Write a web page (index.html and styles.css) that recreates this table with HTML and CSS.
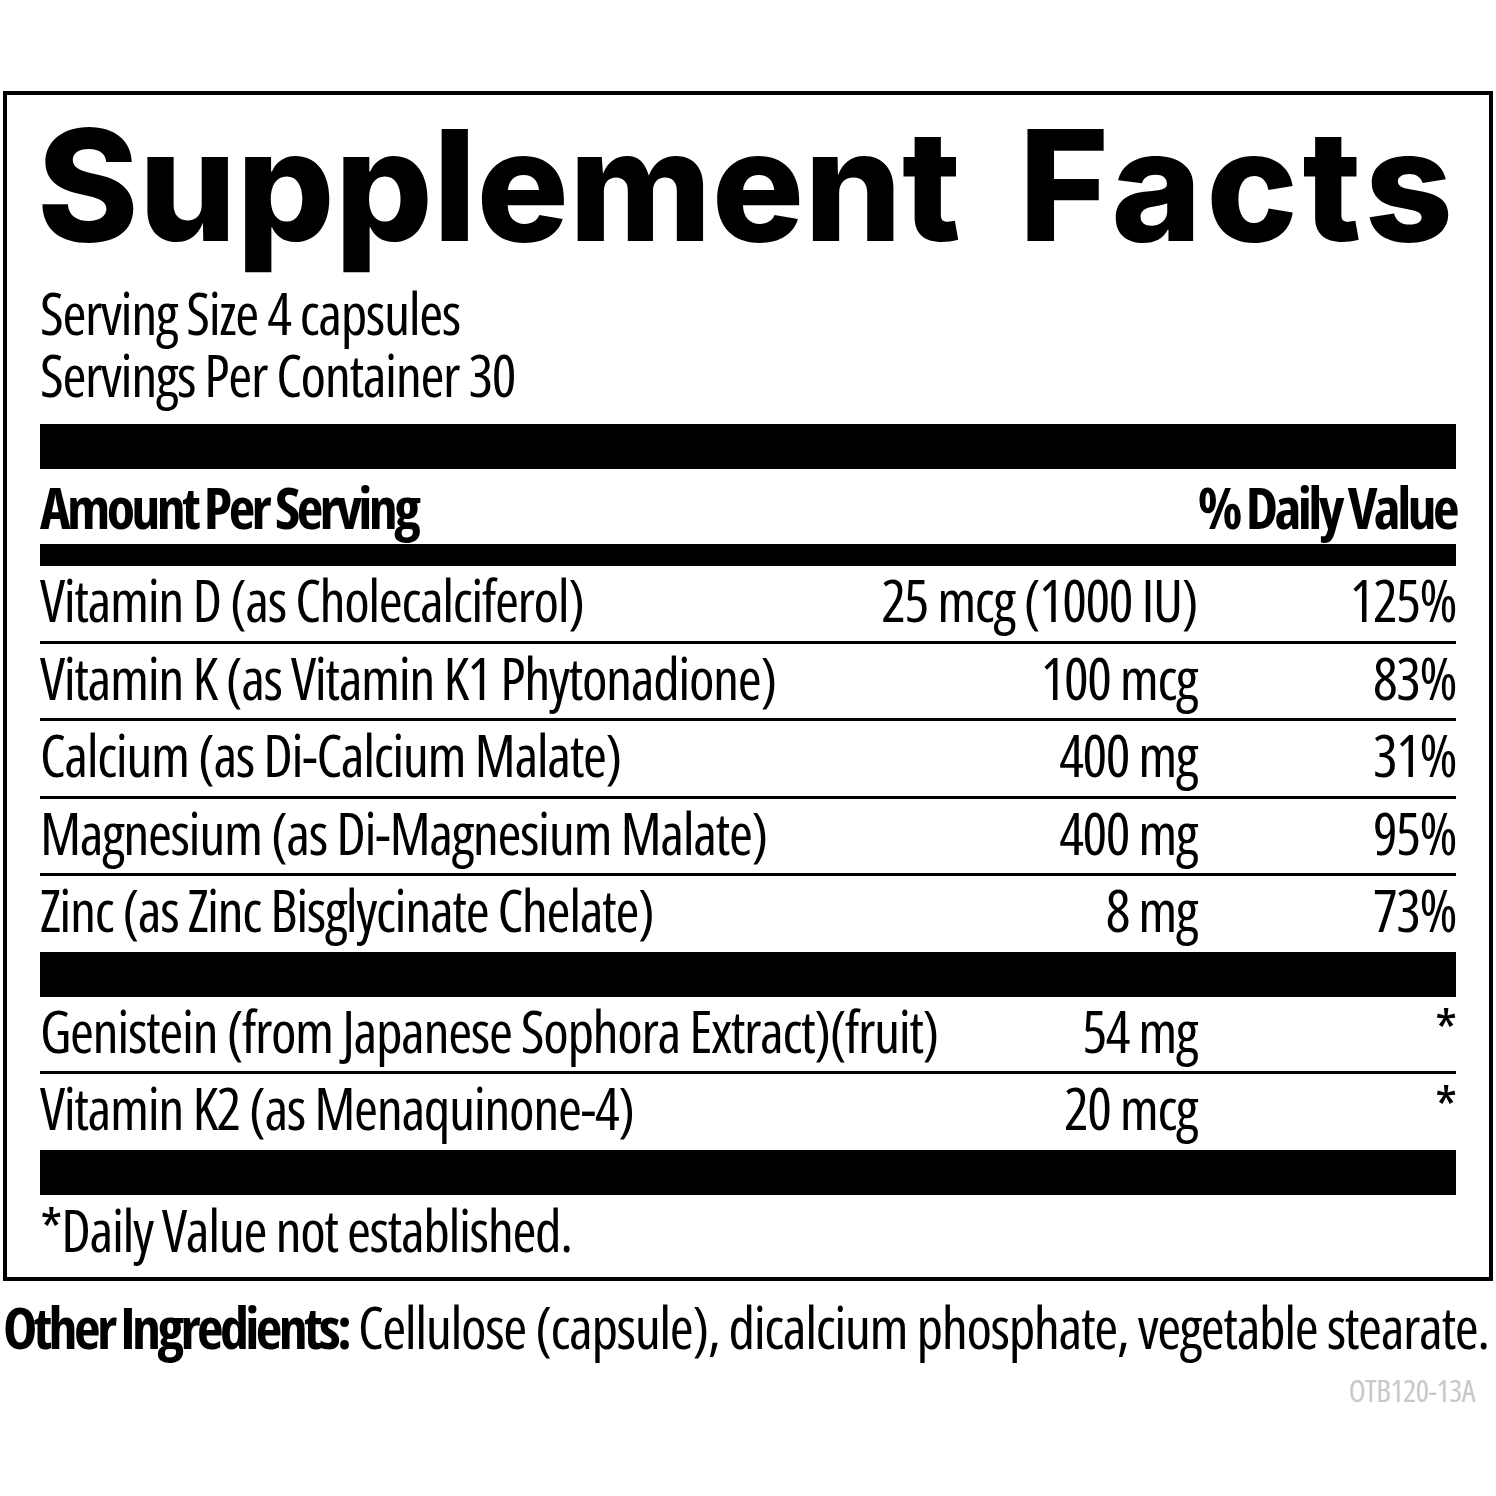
FILE: index.html
```html
<!DOCTYPE html>
<html lang="en">
<head>
<meta charset="utf-8">
<title>Supplement Facts</title>
<link rel="stylesheet" href="styles.css">
</head>
<body>
<div class="page">
  <section class="panel">
    <h1 class="title">Supplement <span class="title-second">Facts</span></h1>
    <div class="serving">
      <div>Serving Size 4 capsules</div>
      <div>Servings Per Container 30</div>
    </div>
    <div class="bar thick"></div>
    <div class="head">
      <span>Amount Per Serving</span>
      <span>% Daily Value</span>
    </div>
    <div class="bar medium"></div>
    <div class="row"><span class="name">Vitamin D (as Cholecalciferol)</span><span class="amt">25 mcg (1000 IU)</span><span class="dv">125%</span></div>
    <div class="row"><span class="name">Vitamin K (as Vitamin K1 Phytonadione)</span><span class="amt">100 mcg</span><span class="dv">83%</span></div>
    <div class="row"><span class="name">Calcium (as Di-Calcium Malate)</span><span class="amt">400 mg</span><span class="dv">31%</span></div>
    <div class="row"><span class="name">Magnesium (as Di-Magnesium Malate)</span><span class="amt">400 mg</span><span class="dv">95%</span></div>
    <div class="row last"><span class="name">Zinc (as Zinc Bisglycinate Chelate)</span><span class="amt">8 mg</span><span class="dv">73%</span></div>
    <div class="bar thick"></div>
    <div class="row"><span class="name">Genistein (from Japanese Sophora Extract)(fruit)</span><span class="amt">54 mg</span><span class="dv">*</span></div>
    <div class="row last"><span class="name">Vitamin K2 (as Menaquinone-4)</span><span class="amt">20 mcg</span><span class="dv">*</span></div>
    <div class="bar thick"></div>
    <p class="note">*Daily Value not established.</p>
  </section>
  <p class="other"><b>Other Ingredients:</b> Cellulose (capsule), dicalcium phosphate, vegetable stearate.</p>
  <p class="code">OTB120-13A</p>
</div>
</body>
</html>
```
FILE: styles.css
```css
html, body {
  margin: 0;
  padding: 0;
  background: #fff;
  color: #000;
}

.page {
  width: 1490px;
  padding: 91px 0 0 3px;
  font-family: "Open Sans", "Liberation Sans", sans-serif;
  font-stretch: 75%;
  font-size: 58px;
  font-weight: 380;
  letter-spacing: -1.4px;
}

.panel {
  border: 4px solid #000;
  padding: 0 33px 13px;
}

.title {
  margin: 12px 0 0 -3px;
  font-family: Inter, "Liberation Sans", sans-serif;
  font-stretch: 100%;
  font-weight: 800;
  font-size: 154px;
  line-height: 156px;
  letter-spacing: 0;
  word-spacing: 24px;
  white-space: nowrap;
}
.title-second {
  letter-spacing: 4.5px;
}

.serving {
  margin-top: 19px;
  line-height: 62px;
}

.bar {
  background: #000;
}
.bar.thick { height: 45px; }
.serving + .bar.thick { margin-top: 18px; }
.bar.medium { height: 22px; }

.head {
  display: flex;
  justify-content: space-between;
  font-weight: 700;
  letter-spacing: -3.6px;
  line-height: 75px;
}

.row {
  display: grid;
  grid-template-columns: 1fr auto 259px;
  line-height: 68px;
  padding-bottom: 6.5px;
  border-bottom: 3px solid #000;
}
.row.last {
  border-bottom: 0;
  padding-bottom: 7.5px;
}
.amt, .dv {
  text-align: right;
  white-space: nowrap;
}

.note {
  margin: 0;
  line-height: 69px;
}

.other {
  margin: 15px 0 0;
  line-height: 62px;
  white-space: nowrap;
}
.other b {
  font-weight: 700;
  letter-spacing: -3.6px;
}

.code {
  margin: 14px 0 0;
  text-align: right;
  padding-right: 18px;
  font-size: 31px;
  line-height: 36px;
  color: #c8c8c8;
  letter-spacing: -0.5px;
}
```
